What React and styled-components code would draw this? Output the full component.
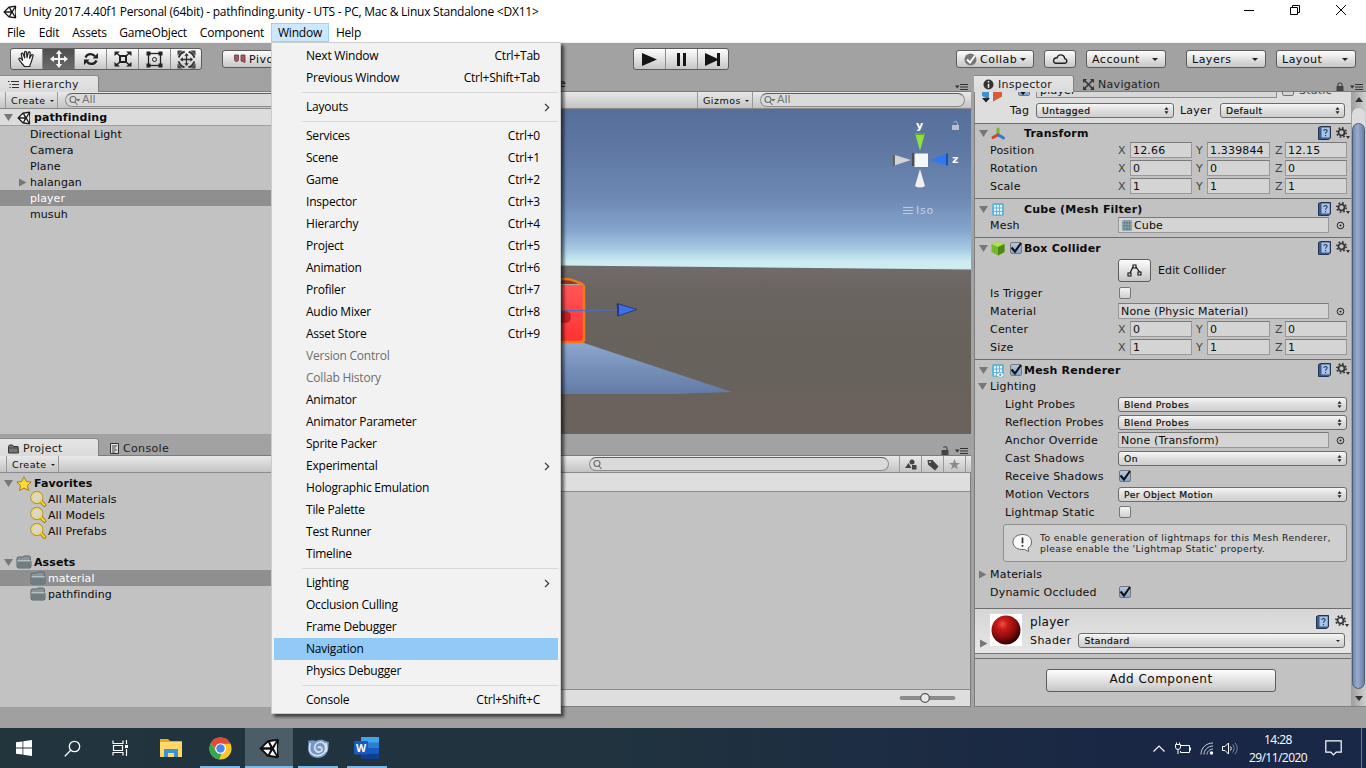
import React from "react";
import styled, { createGlobalStyle, css } from "styled-components";

const Global = createGlobalStyle`
  * { box-sizing: border-box; }
  body { margin: 0; overflow: hidden; background: #a2a2a2; }
  svg { display: block; flex: none; }
`;

const uiFont = css`font-family: "Open Sans", "Noto Sans", sans-serif;`;
const editorFont = css`font-family: "DejaVu Sans", sans-serif;`;

const Screen = styled.div`
  width: 1366px;
  height: 768px;
  display: flex;
  flex-direction: column;
  position: relative;
  overflow: hidden;
  background: #a2a2a2;
  color: #0c0c0c;
  font-size: 11px;
  white-space: nowrap;
  ${editorFont}
`;

/* ---------- window chrome ---------- */
const TitleBar = styled.header`
  height: 23px;
  flex: none;
  background: #fff;
  display: flex;
  align-items: center;
  padding: 0 2px 0 3px;
  gap: 6px;
  font-size: 12px;
  letter-spacing: -0.235px;
  color: #000;
  ${uiFont}
`;
const TitleText = styled.span`
  flex: 1;
  line-height: 22px;
`;
const WindowControls = styled.div`
  display: flex;
  height: 20px;
  align-self: flex-start;
`;
const WindowControl = styled.div`
  width: 46px;
  display: flex;
  align-items: center;
  justify-content: center;
`;
const MenuBar = styled.nav`
  height: 20px;
  flex: none;
  display: flex;
  background: #fff;
  border-bottom: 1px solid #f0f0f0;
  font-size: 12px;
  color: #000;
  ${uiFont}
`;
const MenuBarItem = styled.span`
  width: ${(p) => p.$w}px;
  height: 19px;
  line-height: 19px;
  text-align: center;
  letter-spacing: -0.2px;
  background: ${(p) => (p.$open ? "#cce8ff" : "transparent")};
  box-shadow: ${(p) => (p.$open ? "inset 0 0 0 1px #99d1ff" : "none")};
`;

/* ---------- dropdown ---------- */
const Dropdown = styled.ul`
  position: absolute;
  left: 271px;
  top: 42px;
  width: 290px;
  height: 672px;
  margin: 0;
  padding: 2px 2px 0;
  list-style: none;
  background: #f2f2f2;
  border: 1px solid #ccc;
  box-shadow: 3px 3px 3px rgba(0, 0, 0, 0.6);
  color: #000;
  font-size: 12px;
  z-index: 5;
  ${uiFont}
`;
const DropItem = styled.li`
  height: 22px;
  line-height: 22px;
  display: flex;
  align-items: center;
  justify-content: space-between;
  padding: 0 ${(p) => (p.$sub ? 8 : 18)}px 0 32px;
  letter-spacing: -0.22px;
  color: ${(p) => (p.$off ? "#6d6d6d" : "#000")};
  background: ${(p) => (p.$hot ? "#91c9f7" : "transparent")};
`;
const DropRule = styled.li`
  height: 7px;
  padding: 3px 0 0 28px;
  &::after {
    content: "";
    display: block;
    height: 1px;
    background: #d7d7d7;
  }
`;

/* ---------- editor toolbar ---------- */
const buttonFace = css`
  border: 1px solid #5c5c5c;
  border-radius: 3px;
  background: linear-gradient(#fdfdfd, #e2e2e2 50%, #c6c6c6);
`;
const EditorBar = styled.div`
  height: 32px;
  flex: none;
  display: flex;
  align-items: center;
  padding: 0 10px;
`;
const ButtonGroup = styled.div`
  display: flex;
  height: 22px;
  margin-left: ${(p) => p.$ml || 0}px;
  overflow: hidden;
  ${buttonFace}
`;
const GroupButton = styled.div`
  width: 32px;
  display: flex;
  align-items: center;
  justify-content: center;
  background: ${(p) => (p.$on ? "linear-gradient(#4f4f4f, #6b6b6b)" : "none")};
  & + & { border-left: 1px solid #8d8d8d; }
  &:first-child, &:last-child { width: 31px; }
`;
const BarButton = styled.div`
  height: 18px;
  width: ${(p) => p.$w}px;
  margin-left: ${(p) => p.$ml}px;
  display: flex;
  align-items: center;
  gap: 3px;
  padding: 0 7px 0 ${(p) => (p.$pl === undefined ? 5 : p.$pl)}px;
  letter-spacing: 0.5px;
  font-size: 11px;
  line-height: 17px;
  ${buttonFace}
`;
const Grow = styled.span`
  flex: 1;
  min-width: 0;
`;
const Caret = styled.i`
  border: solid transparent;
  border-width: ${(p) => p.$s || 3}px ${(p) => p.$s || 3}px 0;
  border-top-color: #222;
  flex: none;
`;

/* ---------- docks ---------- */
const Workspace = styled.main`
  height: 632px;
  flex: none;
  display: flex;
  gap: 3px;
`;
const LeftDock = styled.section`
  width: 971px;
  display: flex;
  flex-direction: column;
`;
const DockRow = styled.div`
  display: flex;
  height: ${(p) => p.$h}px;
  margin-bottom: ${(p) => p.$mb || 0}px;
`;
const Panel = styled.section`
  width: ${(p) => p.$w}px;
  display: flex;
  flex-direction: column;
  background: #c2c2c2;
  overflow: hidden;
`;
const TabStrip = styled.div`
  height: ${(p) => p.$h || 17}px;
  flex: none;
  display: flex;
  align-items: stretch;
  background: #a2a2a2;
  border-bottom: 1px solid #7c7c7c;
`;
const Tab = styled.div`
  width: ${(p) => p.$w}px;
  display: flex;
  align-items: center;
  gap: 4px;
  padding-left: ${(p) => p.$pl || 8}px;
  padding-top: ${(p) => (p.$pt === undefined ? 1 : p.$pt)}px;
  letter-spacing: ${(p) => p.$ls || 0.3}px;
  color: #1c1c1c;
  ${(p) =>
    p.$active &&
    css`
      background: linear-gradient(#e6e6e6, #dadada);
      border-top: 1px solid #8a8a8a;
      border-right: 1px solid #808080;
      border-radius: 0 3px 0 0;
      margin-bottom: -1px;
    `}
`;
const TabTools = styled.div`
  margin-left: auto;
  display: flex;
  align-items: flex-end;
  gap: 6px;
  padding: 0 3px 0 0;
`;
const HiddenTabs = styled.div`
  width: 291px;
  text-align: right;
  line-height: 18px;
  letter-spacing: 0.3px;
`;
const PanelBar = styled.div`
  height: 17px;
  flex: none;
  display: flex;
  align-items: center;
  background: linear-gradient(#e9e9e9, #c4c4c4);
  border-bottom: 1px solid #8a8a8a;
`;
const BarCell = styled.div`
  height: 16px;
  width: ${(p) => p.$w}px;
  flex: none;
  margin-left: ${(p) => p.$ml || 0}px;
  display: flex;
  align-items: center;
  justify-content: ${(p) => (p.$center ? "center" : "space-between")};
  padding: 1px ${(p) => (p.$center ? 0 : 3)}px 0 ${(p) => (p.$center ? 0 : 5)}px;
  border-left: 1px solid #9a9a9a;
  border-right: ${(p) => (p.$last ? "1px solid #9a9a9a" : "0")};
  font-size: 9.5px;
  letter-spacing: 0.5px;
  line-height: 15px;
`;
const Search = styled.div`
  height: 14px;
  width: ${(p) => p.$w}px;
  flex: none;
  margin-left: ${(p) => p.$ml || 0}px;
  border: 1px solid #8b8b8b;
  border-top-color: #5d5d5d;
  border-radius: 8px;
  background: #dadada;
  display: flex;
  align-items: center;
  gap: 1px;
  padding-left: 3px;
  color: #757575;
  font-size: 11px;
  line-height: 12px;
`;
const Tree = styled.div`
  width: 275px;
  padding-top: ${(p) => p.$pt || 0}px;
`;
const TreeRow = styled.div`
  height: ${(p) => p.$h || 16}px;
  margin-top: ${(p) => p.$mt || 0}px;
  padding-left: ${(p) => p.$pl}px;
  padding-top: ${(p) => (p.$head ? 1 : 0)}px;
  display: flex;
  align-items: center;
  gap: ${(p) => p.$gap || 0}px;
  letter-spacing: ${(p) => (p.$bold ? 0.1 : 0.08)}px;
  font-weight: ${(p) => (p.$bold ? 700 : 400)};
  color: ${(p) => (p.$sel ? "#fff" : "#0a0a0a")};
  background: ${(p) => (p.$sel ? "#8f8f8f" : p.$head ? "#dcdcdc" : "transparent")};
  border-bottom: ${(p) => (p.$head ? "1px solid #a0a0a0" : "0")};
`;
const ProjectBody = styled.div`
  display: flex;
  flex: 1;
`;
const AssetPane = styled.div`
  flex: 1;
  display: flex;
  flex-direction: column;
  justify-content: space-between;
  border-right: 1px solid #7d7d7d;
  border-bottom: 1px solid #7d7d7d;
`;
const Crumbs = styled.div`
  height: 19px;
  background: #dedede;
  border-bottom: 1px solid #8c8c8c;
`;
const ZoomBar = styled.div`
  height: 17px;
  background: #dedede;
  border-top: 1px solid #8c8c8c;
  display: flex;
  justify-content: flex-end;
  padding: 0 14px 0 0;
  align-items: center;
`;

/* ---------- inspector ---------- */
const InspectorDock = styled.section`
  width: 392px;
  display: flex;
  flex-direction: column;
`;
const InspectorBody = styled.div`
  flex: 1;
  display: flex;
  min-height: 0;
  border-bottom: 1px solid #808080;
`;
const InspectorList = styled.div`
  width: 377px;
  border-left: 1px solid #808080;
  background: #c2c2c2;
  overflow: hidden;
`;
const ObjectHeader = styled.div`
  height: 32px;
  background: #dedede;
  border-bottom: 1px solid #6e6e6e;
  overflow: hidden;
  display: flex;
  padding-left: 6px;
`;
const ObjectFields = styled.div`
  margin-top: -10px;
  flex: 1;
`;
const ObjectLine = styled.div`
  display: flex;
  align-items: center;
  height: ${(p) => p.$h}px;
  margin-top: ${(p) => p.$mt || 0}px;
  letter-spacing: 0.2px;
`;
const NameField = styled.div`
  width: 241px;
  height: 16px;
  margin: 0 5px 0 6px;
  border: 1px solid #8e8e8e;
  background: #d8d8d8;
  padding-left: 3px;
  line-height: 15px;
`;
const StaticLabel = styled.span`
  width: 57px;
  padding-left: 5px;
  color: #444;
`;
const TagLabel = styled.span`
  width: 55px;
  padding-left: 29px;
`;
const LayerLabel = styled.span`
  width: 46px;
  padding-left: 6px;
`;
const Component = styled.div`
  height: ${(p) => p.$h}px;
  border-bottom: 1px solid #6e6e6e;
`;
const CompHead = styled.div`
  height: ${(p) => p.$h || 18}px;
  display: flex;
  align-items: center;
  padding: 2px 1px 0 4px;
  font-weight: 700;
  letter-spacing: 0.2px;
`;
const HeadIcon = styled.span`
  width: 16px;
  margin: 0 ${(p) => (p.$top ? 0 : 2)}px;
  padding-top: ${(p) => (p.$top ? 4 : 0)}px;
  display: flex;
  justify-content: ${(p) => (p.$top ? "flex-start" : "center")};
`;
const CheckSlot = styled.span`
  width: 16px;
  padding-left: 1px;
  display: flex;
`;
const HeadTools = styled.span`
  display: flex;
  align-items: center;
  gap: ${(p) => p.$gap || 5}px;
  padding-bottom: 1px;
`;
const Row = styled.div`
  height: ${(p) => p.$h || 18}px;
  display: flex;
  align-items: center;
`;
const RowLabel = styled.span`
  width: 143px;
  padding-left: ${(p) => (p.$in ? 30 : 15)}px;
  letter-spacing: 0.2px;
  flex: none;
  color: #0e0e0e;
`;
const FoldLabel = styled.span`
  display: flex;
  align-items: center;
  gap: 3px;
  padding-left: 3px;
  letter-spacing: 0.2px;
`;
const EditLabel = styled.span`
  letter-spacing: 0.1px;
`;
const Axis = styled.span`
  width: ${(p) => p.$w}px;
  color: #444;
`;
const Field = styled.span`
  width: ${(p) => p.$w}px;
  height: 16px;
  margin-right: ${(p) => p.$mr || 0}px;
  border: 1px solid #989898;
  border-top-color: #7a7a7a;
  background: #d4d4d4;
  padding: 0 1px 0 2px;
  line-height: 15px;
  letter-spacing: 0.16px;
  display: flex;
  align-items: center;
  gap: 1px;
  overflow: hidden;
`;
const Popup = styled.span`
  width: ${(p) => p.$w}px;
  height: 15px;
  border: 1px solid #6c6c6c;
  border-radius: 3px;
  background: linear-gradient(#f6f6f6, #dedede 50%, #cfcfcf);
  padding: 0 4px 0 5px;
  font-size: 9.2px;
  letter-spacing: 0.44px;
  display: flex;
  align-items: center;
  justify-content: space-between;
  line-height: 13px;
  -webkit-text-stroke: 0.2px #111;
`;
const CheckBox = styled.span`
  width: 12px;
  height: 12px;
  margin-left: ${(p) => p.$ml || 0}px;
  border: 1px solid #777;
  border-radius: 2px;
  background: ${(p) => (p.$on ? "linear-gradient(#b4c6e2, #86a4d2)" : "linear-gradient(#f4f4f4, #d0d0d0)")};
  display: flex;
  align-items: center;
  justify-content: center;
`;
const ColliderButton = styled.span`
  width: 33px;
  height: 23px;
  margin-right: 7px;
  display: flex;
  align-items: center;
  justify-content: center;
  ${buttonFace}
`;
const HelpBox = styled.div`
  height: 38px;
  width: 344px;
  margin: 3px 0 3px 28px;
  border: 1px solid #8f8f8f;
  border-radius: 3px;
  background: #cfcfcf;
  display: flex;
  align-items: center;
  gap: 7px;
  padding-left: 8px;
  font-size: 9.3px;
  line-height: 11px;
  letter-spacing: 0.36px;
  color: #222;
`;
const MaterialBlock = styled.div`
  height: 45px;
  background: linear-gradient(#d6d6d6, #e6e6e6);
  border-bottom: 1px solid #7a7a7a;
  display: flex;
`;
const MaterialInfo = styled.div`
  flex: 1;
  padding: 5px 2px 0 8px;
`;
const MaterialLine = styled.div`
  display: flex;
  align-items: center;
  height: ${(p) => p.$h}px;
  letter-spacing: ${(p) => p.$ls || 0.3}px;
  font-size: ${(p) => p.$fs || 11}px;
  gap: ${(p) => p.$gap || 0}px;
`;
const MaterialFold = styled.span`
  padding: 30px 0 0 4px;
  width: 15px;
`;
const BallBox = styled.span`
  padding-top: 5px;
`;
const AddArea = styled.div`
  border-top: 1px solid #6e6e6e;
  margin-top: 4px;
  padding: 10px 0 0 71px;
`;
const AddButton = styled.div`
  width: 230px;
  height: 23px;
  text-align: center;
  font-size: 12px;
  letter-spacing: 0.5px;
  line-height: 19px;
  ${buttonFace}
`;
const ScrollTrack = styled.div`
  width: 15px;
  background: linear-gradient(90deg, #9e9e9e, #cfcfcf);
  display: flex;
  flex-direction: column;
  align-items: center;
`;
const ScrollArrow = styled.i`
  border: solid transparent;
  border-width: ${(p) => (p.$up ? "0 4px 5px" : "5px 4px 0")};
  border-color: transparent transparent ${(p) => (p.$up ? "#333" : "transparent")};
  border-top-color: ${(p) => (p.$up ? "transparent" : "#333")};
  margin: ${(p) => (p.$up ? "5px 0 6px" : "7px 0 0")};
`;
const ScrollCap = styled.div`
  width: 13px;
  height: 24px;
  border-radius: 7px 7px 0 0;
  background: #dcdcdc;
  margin-bottom: -9px;
`;
const ScrollThumb = styled.div`
  width: 13px;
  height: 566px;
  border: 1px solid #4b5b78;
  border-radius: 7px;
  background: linear-gradient(90deg, #7287ac, #9aacca 40%, #6b80a8);
`;

/* ---------- bottom ---------- */
const StatusStrip = styled.div`
  height: 21px;
  flex: none;
  background: #a0a0a0;
`;
const TaskBar = styled.footer`
  height: 40px;
  flex: none;
  background: linear-gradient(90deg, #22353d, #20333f 45%, #192645 85%, #1a2848);
  display: flex;
  color: #fff;
  font-size: 12px;
  ${uiFont}
`;
const TaskButton = styled.div`
  width: 48px;
  margin-left: ${(p) => p.$ml || 0}px;
  display: flex;
  align-items: center;
  justify-content: center;
  background: ${(p) => (p.$active ? "#4b5d66" : "transparent")};
  ${(p) =>
    p.$open &&
    css`
      background-image: linear-gradient(#7cb9e8, #7cb9e8);
      background-repeat: no-repeat;
      background-position: bottom center;
      background-size: ${p.$active ? 48 : 40}px 2px;
    `}
`;
const Tray = styled.div`
  margin-left: auto;
  display: flex;
  align-items: center;
`;
const TrayIcon = styled.span`
  width: ${(p) => p.$w || 24}px;
  margin-right: ${(p) => p.$mr || 0}px;
  display: flex;
  justify-content: center;
`;
const Clock = styled.div`
  width: 74px;
  text-align: center;
  line-height: 18px;
  padding-top: 1px;
  font-size: 12px;
  letter-spacing: -0.55px;
`;
const ShowDesktop = styled.div`
  width: 5px;
  height: 40px;
  border-left: 1px solid #6c778c;
`;

/* ---------- drawings ---------- */
const UnityMark = ({ s = 14, dark = "#1c1c1c", light = "#fff" }) => (
  <svg width={s} height={s} viewBox="0 0 20 20">
    <path d="M.3 10 8 2.200 18 .6 19 2 18 10l1 8-1 1.400L8 17.800Z" fill={dark} />
    <path d="M4 8.900 8.600 4.400 10.800 8.900ZM4 11.100h6.800L8.600 15.600ZM10.400 3.900 16.200 2.900 12.900 8.200ZM10.400 16.100l5.800 1-3.300-5.300ZM14.200 10 17 4.600v10.800Z" fill={light} />
  </svg>
);
const Tri = ({ open }) => (
  <svg width="9" height="9" viewBox="0 0 9 9">
    <path d={open ? "M0 1h9L4.500 8Z" : "M1 .5v8L8.500 4.500Z"} fill="#777" />
  </svg>
);
const HandIcon = () => (
  <svg width="18" height="18" viewBox="0 0 18 18" fill="#fff" stroke="#222" strokeWidth="1.200" strokeLinejoin="round">
    <path d="M6.500 16.500C4 13.500 2.300 11.400 1 9.600c-.6-1.300 1-1.900 2-.9l1.600 1.700L3.300 4.500c-.2-1.500 1.400-1.800 1.900-.5L6.700 8 6.600 2.400c0-1.500 1.900-1.500 2 0L9 7.700l1.300-5c.4-1.300 2-1 1.900.4L11.600 8.300l1.800-3.200c.8-1 2.200-.4 1.700.9-1.200 3-1.300 5.500-2.600 7.700-.6 1.100-.7 1.700-.7 2.800Z" />
  </svg>
);
const MoveIcon = ({ c = "#f2f2f2", s = 18 }) => (
  <svg width={s} height={s} viewBox="0 0 18 18">
    <path d="M9 0l3.200 4H10v4h4V5.800L18 9l-4 3.200V10h-4v4h2.200L9 18l-3.200-4H8v-4H4v2.200L0 9l4-3.200V8h4V4H5.800Z" fill={c} />
  </svg>
);
const RotateIcon = () => (
  <svg width="16" height="16" viewBox="0 0 16 16" fill="none" stroke="#222" strokeWidth="2.200">
    <path d="M2.500 6.500C4 2.500 9.500 2 12 5.200M13.500 9.500C12 13.500 6.500 14 4 10.800" />
    <path d="M15 2v5.500H9.500ZM1 14V8.500h5.500Z" fill="#222" stroke="none" />
  </svg>
);
const ScaleIcon = () => (
  <svg width="18" height="16" viewBox="0 0 18 16" stroke="#222" strokeWidth="2" fill="none">
    <rect x="6" y="5" width="6" height="6" />
    <path d="M6 5 2 1.500M12 5l4-3.500M6 11l-4 3.500M12 11l4 3.500" strokeWidth="1.600" />
    <path d="M.5 5V.5H6ZM17.500 5V.5H12ZM.5 11v4.500H6ZM17.500 11v4.500H12Z" fill="#222" stroke="none" />
  </svg>
);
const RectIcon = () => (
  <svg width="17" height="17" viewBox="0 0 17 17" stroke="#222" fill="none">
    <rect x="2.500" y="2.500" width="12" height="12" strokeWidth="1.300" />
    <circle cx="8.500" cy="8.500" r="2" />
    <path d="M.5.5h4v4h-4ZM12.500.5h4v4h-4ZM.5 12.500h4v4h-4ZM12.500 12.500h4v4h-4Z" fill="#222" stroke="none" />
  </svg>
);
const MultiIcon = () => (
  <svg width="19" height="19" viewBox="0 0 19 19" fill="none" stroke="#333">
    <circle cx="9.500" cy="9.500" r="8" strokeWidth="2" strokeDasharray="8.500 4.060" strokeDashoffset="-2" />
    <path d="M.5 5.500V.5h5ZM18.500 5.500V.5h-5ZM.5 13.500v5h5ZM18.500 13.500v5h-5Z" fill="#444" stroke="none" />
    <path d="M9.500 4v11M4 9.500h11" strokeWidth="1.300" />
    <path d="M9.500 3l2.200 2.800H7.300ZM9.500 16l2.200-2.800H7.300ZM3 9.500l2.800-2.200v4.400ZM16 9.500l-2.800-2.200v4.400Z" fill="#333" stroke="none" />
  </svg>
);
const PivotIcon = () => (
  <svg width="12" height="10" viewBox="0 0 12 10">
    <path d="M.5 1h4v4.500a2 2 0 0 1-4 0ZM7 1h4v7.500L7 7Z" fill="#b5505f" stroke="#5b3a3f" strokeWidth=".8" />
  </svg>
);
const Lens = ({ menu }) => (
  <svg width="12" height="11" viewBox="0 0 12 11" fill="none" stroke="#6d6d6d" strokeWidth="1.100">
    <circle cx="4" cy="4.500" r="3" />
    <path d="M6 7l2.500 3" />
    {menu && <path d="M7 4h4.500L9.300 6.500Z" fill="#6d6d6d" stroke="none" />}
  </svg>
);
const PanelMenu = () => (
  <svg width="13" height="7" viewBox="0 0 13 7">
    <path d="M0 1.500h4.500L2.200 4.500Z" fill="#333" />
    <path d="M5 .5h8M5 3h8M5 5.500h8" stroke="#333" />
  </svg>
);
const Lock = ({ open, c = "#444" }) => (
  <svg width="8" height="9" viewBox="0 0 8 9">
    <rect x=".5" y="4" width="7" height="5" fill={c} />
    <path d={open ? "M2.300 1.500C3.500.2 6 .5 6 2.500V4" : "M2 4V2.500C2 .4 6 .4 6 2.500V4"} fill="none" stroke={c} strokeWidth="1.100" />
  </svg>
);
const ListIcon = () => (
  <svg width="11" height="9" viewBox="0 0 11 9">
    <path d="M3 1.500h8M4 4.500h7M4 7.500h7" stroke="#333" strokeWidth="1.100" />
    <path d="M0 1h1.500v1H0ZM1.500 4h1.200v1H1.500ZM1.500 7h1.200v1H1.500Z" fill="#333" />
  </svg>
);
const FolderTab = () => (
  <svg width="11" height="10" viewBox="0 0 11 10">
    <path d="M.5 9V2.500L1.500 1h3l1 1.500H10L10.500 9Z" fill="#777" stroke="#333" />
    <path d="M.5 4h10" stroke="#444" />
  </svg>
);
const DocIcon = () => (
  <svg width="9" height="11" viewBox="0 0 9 11">
    <path d="M.5.500h8v10h-8Z" fill="#ddd" stroke="#333" />
    <path d="M2 3h5M2 5h3.500M2 7h5M2 9h3" stroke="#333" strokeWidth=".9" />
  </svg>
);
const Star = () => (
  <svg width="16" height="15" viewBox="0 0 16 15">
    <path d="M8 .8l2.200 4.600 5 .6-3.700 3.500 1 5L8 12.100l-4.500 2.400 1-5L.8 6l5-.6Z" fill="#ffd93b" stroke="#a57d13" />
  </svg>
);
const YellowLens = () => (
  <svg width="17" height="16" viewBox="0 0 17 16" fill="none">
    <circle cx="6.800" cy="6.500" r="5" stroke="#a8861b" strokeWidth="3" />
    <path d="M10.500 10l4 4" stroke="#94700f" strokeWidth="3.600" strokeLinecap="round" />
    <circle cx="6.800" cy="6.500" r="5" stroke="#f3d96a" strokeWidth="1.500" fill="#d9d7c8" />
    <path d="M10.500 10l4 4" stroke="#ffd42c" strokeWidth="2" strokeLinecap="round" />
  </svg>
);
const Folder = () => (
  <svg width="16" height="14" viewBox="0 0 16 14">
    <path d="M1 12V3l.8-1h5L8 1h5.500l.8 1v4H15v6.200l-1 .8H2Z" fill="#8b9599" stroke="#5d686d" />
    <path d="M1.500 5h13l-.3 8H2Z" fill="#6f7d82" />
    <path d="M1.500 5h13v1.500h-13Z" fill="#b5bec1" />
  </svg>
);
const Book = () => (
  <svg width="13" height="14" viewBox="0 0 13 14">
    <path d="M.5 1.500 2.500.500h10v11.500l-2 1.500H.5Z" fill="#3d5b8c" stroke="#24344f" />
    <path d="M3.500 1.500h8.200v10H3.500Z" fill="#a9c4ea" />
    <path d="M5.800 5c.2-2 3.400-1.800 3.300 0-.1 1.200-1.500 1.200-1.600 2.700M7.500 9v1.200" stroke="#223b66" strokeWidth="1.100" fill="none" />
  </svg>
);
const Gear = () => (
  <svg width="14" height="13" viewBox="0 0 14 13">
    <circle cx="5.500" cy="5.500" r="3" fill="none" stroke="#333" strokeWidth="1.700" />
    <circle cx="5.500" cy="5.500" r="4.600" fill="none" stroke="#333" strokeWidth="1.700" strokeDasharray="1.700 1.913" />
    <path d="M10 9h4l-2 3Z" fill="#333" />
  </svg>
);
const Tick = () => (
  <svg width="12" height="12" viewBox="0 0 12 12">
    <path d="M1.500 5.500 5 9.500 11 1" stroke="#111" strokeWidth="2.100" fill="none" />
  </svg>
);
const Target = () => (
  <svg width="9" height="9" viewBox="0 0 9 9">
    <circle cx="4.500" cy="4.500" r="3.300" fill="none" stroke="#222" />
    <circle cx="4.500" cy="4.500" r="1" fill="#222" />
  </svg>
);
const Updown = () => (
  <svg width="5" height="7" viewBox="0 0 5 7">
    <path d="M2.500 0 4.500 2.700H.5ZM2.500 7 4.500 4.300H.5Z" fill="#222" />
  </svg>
);
const AxisIcon = () => (
  <svg width="15" height="13" viewBox="0 0 15 13" strokeWidth="3" strokeLinecap="round">
    <path d="M7 7V2" stroke="#7fb52c" />
    <path d="M6.500 8 2 10.500" stroke="#d6402c" />
    <path d="M7.500 8l5 3" stroke="#3b76c9" />
  </svg>
);
const Grid = ({ eye, dim }) => (
  <svg width={dim ? 12 : 14} height={dim ? 13 : 15} viewBox="0 0 14 15">
    <rect x="1" y="1" width="12" height="13" rx="2" fill={dim ? "#8fa3ac" : "#62b4dc"} />
    <path d="M3 3h2v2.500H3ZM6 3h2v2.500H6ZM9 3h2v2.500H9ZM3 6.500h2V9H3ZM6 6.500h2V9H6ZM9 6.500h2V9H9ZM3 10h2v2.500H3ZM6 10h2v2.500H6ZM9 10h2v2.500H9Z" fill={dim ? "#5e7a87" : "#e3f5fd"} />
    {eye && <path d="M5 12c2.500-3.500 6-3.500 8.500 0-2.500 3-6 3-8.500 0Z" fill="#fff" stroke="#6aa" strokeWidth=".7" />}
    {eye && <circle cx="9.300" cy="11.800" r="1.300" fill="#5ba7cf" />}
  </svg>
);
const GreenCube = () => (
  <svg width="14" height="15" viewBox="0 0 14 15">
    <path d="M7 .5 13.500 3v8L7 14.500.5 11V3Z" fill="#77b82a" />
    <path d="M7 .5 13.500 3 7 6 .5 3Z" fill="#b4e05a" />
    <path d="M7 6l6.500-3v8L7 14.500Z" fill="#4c8a14" />
  </svg>
);
const PrefabCube = () => (
  <svg width="22" height="24" viewBox="0 0 22 24">
    <path d="M1 6l10-4 10 4v10l-9 5.500-11-5.500Z" fill="#3f8fd2" />
    <path d="M12 10l9-4v10.500l-9 5Z" fill="#e05a35" />
    <path d="M12 12 8 11v9l4 2Z" fill="#dfe9f2" />
    <path d="M1 18h8l-4 4.500Z" fill="#222" />
  </svg>
);
const Bubble = () => (
  <svg width="21" height="20" viewBox="0 0 21 20">
    <path d="M10.500 1.500c5.500 0 9 3.200 9 7.500 0 3-1.500 5-3.500 6l.6 3.500-4.200-2.100c-6.800.8-11.400-2.400-11.400-7.400 0-4.300 4-7.500 9.500-7.500Z" fill="#fafafa" stroke="#666" />
    <path d="M10.500 4.500v5.800M10.500 12v1.700" stroke="#333" strokeWidth="1.700" />
  </svg>
);
const ColliderIcon = () => (
  <svg width="15" height="13" viewBox="0 0 15 13" stroke="#111" fill="none">
    <path d="M3 9 6 3M9 3l3.500 5" strokeWidth="1.200" />
    <path d="M1 9h3v3H1ZM6 1h3v3H6ZM11 8h3v3h-3Z" strokeWidth="1.100" />
  </svg>
);
const MaterialBall = () => (
  <svg width="32" height="32" viewBox="0 0 32 32">
    <defs>
      <radialGradient id="ball" cx=".38" cy=".3" r=".75">
        <stop offset="0" stopColor="#ef5149" />
        <stop offset=".25" stopColor="#c91a18" />
        <stop offset=".6" stopColor="#8d0d0c" />
        <stop offset="1" stopColor="#1e0000" />
      </radialGradient>
    </defs>
    <rect width="32" height="32" fill="#fff" />
    <circle cx="16" cy="16" r="14.500" fill="url(#ball)" />
  </svg>
);

const SceneView = () => (
  <svg width="696" height="325" viewBox="275 109 696 325">
    <defs>
      <linearGradient id="sky" x1="0" y1="0" x2="0" y2="1">
        <stop offset="0" stopColor="#566e9a" />
        <stop offset=".25" stopColor="#5e78a3" />
        <stop offset=".55" stopColor="#6d89b3" />
        <stop offset=".75" stopColor="#84a4cc" />
        <stop offset=".87" stopColor="#a8cae3" />
        <stop offset=".95" stopColor="#cdedf3" />
        <stop offset="1" stopColor="#cfeaee" />
      </linearGradient>
      <linearGradient id="ground" x1="0" y1="0" x2="0" y2="1">
        <stop offset="0" stopColor="#8b9395" />
        <stop offset=".02" stopColor="#706c6c" />
        <stop offset=".15" stopColor="#6b6562" />
        <stop offset=".5" stopColor="#68625c" />
        <stop offset="1" stopColor="#6a625d" />
      </linearGradient>
      <linearGradient id="plane" x1="0" y1="0" x2="0" y2="1">
        <stop offset="0" stopColor="#8ba6cf" />
        <stop offset="1" stopColor="#637aa5" />
      </linearGradient>
      <linearGradient id="cube" x1="0" y1="0" x2="0" y2="1">
        <stop offset="0" stopColor="#ff5a5c" />
        <stop offset="1" stopColor="#ff3033" />
      </linearGradient>
    </defs>
    <rect x="275" y="109" width="696" height="161" fill="url(#sky)" />
    <path d="M275 262 561 265.500 971 269.500V434H275Z" fill="url(#ground)" />
    <path d="M400 343h184L732 392l-60 2H400Z" fill="url(#plane)" />
    <path d="M500 279h66l5 0 13 6v56l-3 2h-81Z" fill="url(#cube)" />
    <path d="M500 280h70l13 5h-83Z" fill="#8c3a36" />
    <path d="M500 284.500h83" stroke="#b8a59c" />
    <path d="M556 311h10q5 1 5 6t-5 6h-10Z" fill="#c32025" />
    <path d="M500 279h66q5 0 10 2.500l6 2.500q2 1 2 3v52q0 3-3 3h-81" fill="none" stroke="#f07a18" strokeWidth="2.500" />
    <path d="M500 311.500 620 310" stroke="#4f6fc0" strokeWidth="1.200" />
    <path d="M617 303.500 637 309.500 618 316Z" fill="#3d6fe8" stroke="#1d2f6e" strokeWidth=".8" />
    <path d="M617 303.500l2 1v10l-2 1.500Z" fill="#1d3a8c" />
    <path d="M915 133h10l-5 18Z" fill="#8ee03c" />
    <path d="M915 133h10l-1 2h-8Z" fill="#5fa823" />
    <path d="M893 154.500 911 160l-18 6Z" fill="#d3d3d3" />
    <path d="M892.500 154.500h2.500v11.500h-2.500Z" fill="#666" />
    <path d="M948 153v13l-18-6Z" fill="#2f78f0" />
    <path d="M948 153v13l-2-1V154Z" fill="#1d4fae" />
    <path d="M912 153h3v13h-3Z" fill="#4a4f5a" />
    <rect x="914.500" y="153.500" width="13.500" height="13.500" fill="#f5f7fa" />
    <path d="M920 169l5 17q-5 3-10 0Z" fill="#eef0f2" />
    <g fontFamily="DejaVu Sans" fontSize="11" fill="#fff">
      <text x="916" y="129" fontWeight="700">y</text>
      <text x="952" y="163" fontWeight="700">z</text>
      <text x="916" y="214" fill="#c5cfdf" letterSpacing=".8">Iso</text>
    </g>
    <path d="M903 207.500h10M903 210.500h10M903 213.500h10" stroke="#bcc9dc" />
    <rect x="952" y="125" width="7" height="5" fill="#b9bfc9" />
    <path d="M953.500 122.500c1-1.500 4-1.500 4 1V125" fill="none" stroke="#b9bfc9" />
  </svg>
);

/* ---------- composed parts ---------- */
const SHORTCUTS = [
  ["Next Window", "Ctrl+Tab"], ["Previous Window", "Ctrl+Shift+Tab"], null,
  ["Layouts", ">"], null,
  ["Services", "Ctrl+0"], ["Scene", "Ctrl+1"], ["Game", "Ctrl+2"], ["Inspector", "Ctrl+3"],
  ["Hierarchy", "Ctrl+4"], ["Project", "Ctrl+5"], ["Animation", "Ctrl+6"], ["Profiler", "Ctrl+7"],
  ["Audio Mixer", "Ctrl+8"], ["Asset Store", "Ctrl+9"], ["Version Control", "", "off"],
  ["Collab History", "", "off"], ["Animator"], ["Animator Parameter"], ["Sprite Packer"],
  ["Experimental", ">"], ["Holographic Emulation"], ["Tile Palette"], ["Test Runner"], ["Timeline"], null,
  ["Lighting", ">"], ["Occlusion Culling"], ["Frame Debugger"], ["Navigation", "", "hot"], ["Physics Debugger"], null,
  ["Console", "Ctrl+Shift+C"],
];
const Chevron = () => (
  <svg width="6" height="9" viewBox="0 0 6 9">
    <path d="M1 .8 4.700 4.500 1 8.200" fill="none" stroke="#333" strokeWidth="1.200" />
  </svg>
);
const WindowMenu = () => (
  <Dropdown>
    {SHORTCUTS.map((it, i) =>
      it === null ? (
        <DropRule key={i} />
      ) : (
        <DropItem key={i} $off={it[2] === "off"} $hot={it[2] === "hot"} $sub={it[1] === ">"}>
          <span>{it[0]}</span>
          {it[1] === ">" ? <Chevron /> : <span>{it[1]}</span>}
        </DropItem>
      )
    )}
  </Dropdown>
);
const Check = ({ on, ml }) => <CheckBox $on={on} $ml={ml}>{on && <Tick />}</CheckBox>;
const Vector = ({ label, v }) => (
  <Row>
    <RowLabel>{label}</RowLabel>
    <Axis $w={12}>X</Axis><Field $w={62} $mr={4}>{v[0]}</Field>
    <Axis $w={11}>Y</Axis><Field $w={63} $mr={5}>{v[1]}</Field>
    <Axis $w={10}>Z</Axis><Field $w={62}>{v[2]}</Field>
  </Row>
);
const ObjectRow = ({ label, inset, icon, value, h }) => (
  <Row $h={h}>
    <RowLabel $in={inset}>{label}</RowLabel>
    <Field $w={211} $mr={7}>{icon}{value}</Field>
    <Target />
  </Row>
);
const PopupRow = ({ label, value }) => (
  <Row><RowLabel $in>{label}</RowLabel><Popup $w={229}>{value}<Updown /></Popup></Row>
);
const CheckRow = ({ label, on, inset, h }) => (
  <Row $h={h}><RowLabel $in={inset}>{label}</RowLabel><Check on={on} ml={1} /></Row>
);
const Head = ({ icon, check, title, h }) => (
  <CompHead $h={h}>
    <Tri open />
    <HeadIcon>{icon}</HeadIcon>
    <CheckSlot>{check && <Check on ml={1} />}</CheckSlot>
    <Grow>{title}</Grow>
    <HeadTools><Book /><Gear /></HeadTools>
  </CompHead>
);

const HierarchyPanel = () => (
  <Panel $w={275}>
    <TabStrip>
      <Tab $active $w={99} $pl={8}><ListIcon />Hierarchy</Tab>
    </TabStrip>
    <PanelBar>
      <BarCell $w={53} $ml={5} $last>Create<Caret $s={2.5} /></BarCell>
      <Search $w={240} $ml={7}><Lens menu />All</Search>
    </PanelBar>
    <Tree>
      <TreeRow $head $bold $h={17} $pl={4} $gap={3.5}><Tri open /><UnityMark s={14} />pathfinding</TreeRow>
      <TreeRow $pl={30}>Directional Light</TreeRow>
      <TreeRow $pl={30}>Camera</TreeRow>
      <TreeRow $pl={30}>Plane</TreeRow>
      <TreeRow $pl={18} $gap={3}><Tri />halangan</TreeRow>
      <TreeRow $pl={30} $sel>player</TreeRow>
      <TreeRow $pl={30}>musuh</TreeRow>
    </Tree>
  </Panel>
);
const ScenePanel = () => (
  <Panel $w={696}>
    <TabStrip>
      <HiddenTabs>Asset Store</HiddenTabs>
      <TabTools><PanelMenu /></TabTools>
    </TabStrip>
    <PanelBar>
      <BarCell $w={56} $ml={422} $last>Gizmos<Caret $s={2.5} /></BarCell>
      <Search $w={205} $ml={7}><Lens menu />All</Search>
    </PanelBar>
    <SceneView />
  </Panel>
);
const ProjectPanel = () => (
  <Panel $w={971}>
    <TabStrip $h={18}>
      <Tab $active $w={99} $pl={8} $pt={2}><FolderTab />Project</Tab>
      <Tab $w={120} $pl={11} $pt={3} $ls={0.35}><DocIcon />Console</Tab>
      <TabTools><Lock open /><PanelMenu /></TabTools>
    </TabStrip>
    <PanelBar>
      <BarCell $w={53} $ml={6} $last>Create<Caret $s={2.5} /></BarCell>
      <Search $w={300} $ml={530}><Lens /></Search>
      <BarCell $center $w={22} $ml={10}>
        <svg width="12" height="11" viewBox="0 0 12 11" fill="#444"><circle cx="7" cy="3" r="2.500" /><path d="M0 9 3.500 4l3 5ZM7 6h4.500v4.500H7Z" /></svg>
      </BarCell>
      <BarCell $center $w={22}>
        <svg width="12" height="12" viewBox="0 0 12 12"><path d="M.5 1h5l6 6.500-3.500 4L1 5.500Z" fill="#444" /><circle cx="3" cy="3" r="1" fill="#ccc" /></svg>
      </BarCell>
      <BarCell $center $w={23} $last>
        <svg width="11" height="11" viewBox="0 0 11 11"><path d="M5.500 0 7 4h4L7.700 6.500 9 10.500 5.500 8 2 10.500l1.300-4L0 4h4Z" fill="#8a8a8a" /></svg>
      </BarCell>
    </PanelBar>
    <ProjectBody>
      <Tree $pt={2}>
        <TreeRow $bold $pl={4} $gap={2.5}><Tri open /><Star />Favorites</TreeRow>
        <TreeRow $pl={30} $gap={1}><YellowLens />All Materials</TreeRow>
        <TreeRow $pl={30} $gap={1}><YellowLens />All Models</TreeRow>
        <TreeRow $pl={30} $gap={1}><YellowLens />All Prefabs</TreeRow>
        <TreeRow $bold $mt={15} $pl={4} $gap={2.5}><Tri open /><Folder />Assets</TreeRow>
        <TreeRow $pl={30} $gap={2} $sel><Folder />material</TreeRow>
        <TreeRow $pl={30} $gap={2}><Folder />pathfinding</TreeRow>
      </Tree>
      <AssetPane>
        <Crumbs />
        <ZoomBar>
          <svg width="57" height="12" viewBox="0 0 57 12">
            <rect x="1" y="4.500" width="55" height="3" rx="1.500" fill="#8c8c8c" stroke="#6b6b6b" strokeWidth=".6" />
            <circle cx="26" cy="6" r="4.300" fill="#e9e9e9" stroke="#555" strokeWidth="1.200" />
          </svg>
        </ZoomBar>
      </AssetPane>
    </ProjectBody>
  </Panel>
);
const Inspector = () => (
  <InspectorDock>
    <TabStrip>
      <Tab $active $w={100} $pl={9}>
        <svg width="11" height="11" viewBox="0 0 11 11"><circle cx="5.500" cy="5.500" r="5" fill="#333" /><path d="M5.500 2v1.500M5.500 4.800v4" stroke="#eee" strokeWidth="1.500" /></svg>
        Inspector
      </Tab>
      <Tab $w={120} $pl={9} $pt={2}>
        <svg width="11" height="11" viewBox="0 0 11 11"><path d="M1 1l9 9M10 1 1 10" stroke="#333" strokeWidth="1.500" /><path d="M0 0h4L0 4ZM11 0v4L7 0ZM0 11V7l4 4ZM11 11H7l4-4Z" fill="#333" /></svg>
        Navigation
      </Tab>
      <TabTools><Lock /><PanelMenu /></TabTools>
    </TabStrip>
    <InspectorBody>
      <InspectorList>
        <ObjectHeader>
          <ObjectFields>
            <ObjectLine $h={16}>
              <HeadIcon $top><PrefabCube /></HeadIcon>
              <Grow />
              <Check on />
              <NameField>player</NameField>
              <Check />
              <StaticLabel>Static</StaticLabel>
            </ObjectLine>
            <ObjectLine $h={16} $mt={4}>
              <TagLabel>Tag</TagLabel>
              <Popup $w={138}>Untagged<Updown /></Popup>
              <LayerLabel>Layer</LayerLabel>
              <Popup $w={125}>Default<Updown /></Popup>
            </ObjectLine>
          </ObjectFields>
        </ObjectHeader>
        <Component $h={75}>
          <Head icon={<AxisIcon />} title="Transform" h={17} />
          <Vector label="Position" v={["12.66", "1.339844", "12.15"]} />
          <Vector label="Rotation" v={["0", "0", "0"]} />
          <Vector label="Scale" v={["1", "1", "1"]} />
        </Component>
        <Component $h={39}>
          <Head icon={<Grid />} title="Cube (Mesh Filter)" />
          <ObjectRow label="Mesh" icon={<Grid dim />} value="Cube" h={16} />
        </Component>
        <Component $h={122}>
          <Head icon={<GreenCube />} check title="Box Collider" />
          <Row $h={28}><RowLabel /><ColliderButton><ColliderIcon /></ColliderButton><EditLabel>Edit Collider</EditLabel></Row>
          <CheckRow label="Is Trigger" />
          <ObjectRow label="Material" value="None (Physic Material)" />
          <Vector label="Center" v={["0", "0", "0"]} />
          <Vector label="Size" v={["1", "1", "1"]} />
        </Component>
        <Component $h={249}>
          <Head icon={<Grid eye />} check title="Mesh Renderer" />
          <Row $h={17}><FoldLabel><Tri open />Lighting</FoldLabel></Row>
          <PopupRow label="Light Probes" value="Blend Probes" />
          <PopupRow label="Reflection Probes" value="Blend Probes" />
          <ObjectRow label="Anchor Override" inset value="None (Transform)" />
          <PopupRow label="Cast Shadows" value="On" />
          <CheckRow label="Receive Shadows" inset on />
          <PopupRow label="Motion Vectors" value="Per Object Motion" />
          <CheckRow label="Lightmap Static" inset />
          <HelpBox>
            <Bubble />
            <div>To enable generation of lightmaps for this Mesh Renderer,<br />please enable the 'Lightmap Static' property.</div>
          </HelpBox>
          <Row><FoldLabel><Tri />Materials</FoldLabel></Row>
          <CheckRow label="Dynamic Occluded" on />
        </Component>
        <MaterialBlock>
          <MaterialFold><Tri /></MaterialFold>
          <BallBox><MaterialBall /></BallBox>
          <MaterialInfo>
            <MaterialLine $h={16} $fs={12}><Grow>player</Grow><HeadTools $gap={6}><Book /><Gear /></HeadTools></MaterialLine>
            <MaterialLine $h={21} $gap={7} $ls={0.4}>Shader<Popup $w={267}>Standard<Caret $s={2.5} /></Popup></MaterialLine>
          </MaterialInfo>
        </MaterialBlock>
        <AddArea><AddButton>Add Component</AddButton></AddArea>
      </InspectorList>
      <ScrollTrack>
        <ScrollArrow $up />
        <ScrollCap />
        <ScrollThumb />
        <ScrollArrow />
      </ScrollTrack>
    </InspectorBody>
  </InspectorDock>
);

const WordIcon = () => (
  <svg width="26" height="24" viewBox="0 0 26 24">
    <path d="M7 1h18v22H7Z" fill="#2b7cd3" /><path d="M7 1h18v5.500H7Z" fill="#41a5ee" />
    <path d="M7 12h18v5.500H7Z" fill="#185abd" /><path d="M7 17.500h18V23H7Z" fill="#103f91" />
    <rect x="0" y="5" width="14" height="13.500" rx="1" fill="#185abd" />
    <text x="7" y="15.500" fontFamily="Open Sans" fontWeight="700" fontSize="10.500" fill="#fff" textAnchor="middle">W</text>
  </svg>
);
const Chrome = () => (
  <svg width="23" height="23" viewBox="0 0 24 24">
    <circle cx="12" cy="12" r="11.500" fill="#fbc62d" />
    <path d="M2 6.300A11.500 11.500 0 0 1 22.300 7H12a5 5 0 0 0-4.500 7.200Z" fill="#e04a3a" />
    <path d="M2 6.300 7.600 15a5 5 0 0 0 5.600 2L10.500 23.400A11.500 11.500 0 0 1 2 6.300Z" fill="#35a552" />
    <circle cx="12" cy="12" r="5.600" fill="#fff" /><circle cx="12" cy="12" r="4.400" fill="#4a86ee" />
  </svg>
);
const Swirl = () => (
  <svg width="23" height="21" viewBox="0 0 23 21" fill="none">
    <path d="M1 3c3-1 6-1 8 0 4-2 8-1 9 0l4 1c-1 3 0 5-1 8-1 5-6 8-10 8C5 20 1 16 1 11 1 8 2 6 1 3Z" fill="#7896c2" />
    <path d="M3 5c0 4-2 6 1 10 3 3 9 4 13 0 3-4 2-10-3-11-5 0-7 4-6 7 1 4 6 4 7 1 0-3-3-4-4-2M19 5c1 3 1 6 0 9" stroke="#d3e3f4" strokeWidth="1.700" />
  </svg>
);

export default function App() {
  return (
    <Screen>
      <Global />
      <TitleBar>
        <UnityMark s={14} />
        <TitleText>Unity 2017.4.40f1 Personal (64bit) - pathfinding.unity - UTS - PC, Mac &amp; Linux Standalone &lt;DX11&gt;</TitleText>
        <WindowControls>
          <WindowControl><svg width="10" height="10" viewBox="0 0 10 10"><path d="M0 5.500h10" stroke="#000" /></svg></WindowControl>
          <WindowControl><svg width="10" height="10" viewBox="0 0 10 10" fill="none" stroke="#000"><path d="M.5 2.500h7v7h-7ZM2.500 2.500v-2h7v7h-2" /></svg></WindowControl>
          <WindowControl><svg width="10" height="10" viewBox="0 0 10 10"><path d="M0 0l10 10M10 0 0 10" stroke="#000" /></svg></WindowControl>
        </WindowControls>
      </TitleBar>
      <MenuBar>
        <MenuBarItem $w={32}>File</MenuBarItem>
        <MenuBarItem $w={34}>Edit</MenuBarItem>
        <MenuBarItem $w={47}>Assets</MenuBarItem>
        <MenuBarItem $w={80}>GameObject</MenuBarItem>
        <MenuBarItem $w={78}>Component</MenuBarItem>
        <MenuBarItem $w={58} $open>Window</MenuBarItem>
        <MenuBarItem $w={39}>Help</MenuBarItem>
      </MenuBar>
      <EditorBar>
        <ButtonGroup>
          <GroupButton><HandIcon /></GroupButton>
          <GroupButton $on><MoveIcon /></GroupButton>
          <GroupButton><RotateIcon /></GroupButton>
          <GroupButton><ScaleIcon /></GroupButton>
          <GroupButton><RectIcon /></GroupButton>
          <GroupButton><MultiIcon /></GroupButton>
        </ButtonGroup>
        <BarButton $w={64} $ml={20} $pl={11}><PivotIcon />Pivot</BarButton>
        <ButtonGroup $ml={347}>
          <GroupButton><svg width="15" height="13" viewBox="0 0 15 13"><path d="M0 0l15 6.500L0 13Z" fill="#151515" /></svg></GroupButton>
          <GroupButton><svg width="10" height="13" viewBox="0 0 10 13"><path d="M0 0h3v13H0ZM6 0h3v13H6Z" fill="#151515" /></svg></GroupButton>
          <GroupButton><svg width="16" height="13" viewBox="0 0 16 13"><path d="M0 0l12 5.500V0h3v13h-3V7.500L0 13Z" fill="#151515" /></svg></GroupButton>
        </ButtonGroup>
        <Grow />
        <BarButton $w={78} $ml={0} $pl={7}>
          <svg width="13" height="13" viewBox="0 0 13 13"><circle cx="6.500" cy="6.500" r="6" fill="#777" /><path d="M3 6.500 6 9.500 11 2.500" stroke="#fff" strokeWidth="2" fill="none" /></svg>
          <Grow>Collab</Grow><Caret />
        </BarButton>
        <BarButton $w={32} $ml={10} $pl={7}>
          <svg width="16" height="12" viewBox="0 0 15 11"><path d="M3.500 9.500h8c3 0 3.200-3.700.5-4.300C11.500 1 6 .2 4.800 4.300 1 4 .3 9 3.500 9.500Z" fill="none" stroke="#222" strokeWidth="1.300" /></svg>
        </BarButton>
        <BarButton $w={80} $ml={10}><Grow>Account</Grow><Caret /></BarButton>
        <BarButton $w={80} $ml={20}><Grow>Layers</Grow><Caret /></BarButton>
        <BarButton $w={80} $ml={10}><Grow>Layout</Grow><Caret /></BarButton>
      </EditorBar>
      <Workspace>
        <LeftDock>
          <DockRow $h={359} $mb={4}>
            <HierarchyPanel />
            <ScenePanel />
          </DockRow>
          <DockRow $h={269}>
            <ProjectPanel />
          </DockRow>
        </LeftDock>
        <Inspector />
      </Workspace>
      <StatusStrip />
      <TaskBar>
        <TaskButton><svg width="16" height="16" viewBox="0 0 16 16" fill="#fff"><path d="M0 2.300 6.500 1.400v6.200H0ZM7.300 1.200 16 0v7.600H7.300ZM0 8.400h6.500v6.200L0 13.700ZM7.300 8.400H16V16l-8.700-1.200Z" /></svg></TaskButton>
        <TaskButton><svg width="17" height="17" viewBox="0 0 17 17" fill="none" stroke="#fff" strokeWidth="1.300"><circle cx="10.500" cy="6.500" r="5.200" /><path d="M6.700 10.300.8 16.200" /></svg></TaskButton>
        <TaskButton><svg width="17" height="16" viewBox="0 0 17 16" fill="none" stroke="#fff" strokeWidth="1.200"><path d="M1 .5v3h10v-3M1 15.500v-3h10v3M1.500 5.500h9v5h-9ZM14.500 0v4M14.500 9v7" /><path d="M13 5h3v3h-3Z" fill="#fff" stroke="none" /></svg></TaskButton>
        <TaskButton $ml={3}>
          <svg width="22" height="18" viewBox="0 0 22 18"><path d="M0 0h8l2 2H22V18H0Z" fill="#e8a91c" /><path d="M0 3h22v15H0Z" fill="#ffd867" /><path d="M4 18v-8h14v8h-4v-4H8v4Z" fill="#3c93d2" /></svg>
        </TaskButton>
        <TaskButton $ml={1} $open><Chrome /></TaskButton>
        <TaskButton $ml={1} $open $active><UnityMark s={21} dark="#101010" /></TaskButton>
        <TaskButton $ml={1} $open><Swirl /></TaskButton>
        <TaskButton $ml={1} $open><WordIcon /></TaskButton>
        <Tray>
          <TrayIcon><svg width="12" height="7" viewBox="0 0 12 7"><path d="M.5 6.500 6 1l5.500 5.500" fill="none" stroke="#fff" strokeWidth="1.200" /></svg></TrayIcon>
          <TrayIcon><svg width="17" height="13" viewBox="0 0 17 13" fill="none" stroke="#fff"><path d="M6 3.500h8.500v7H5.500V9M15.500 5.500v3M1.500.500v2M4.500.500v2M.5 2.500h5v2.500a2.500 2.500 0 0 1-5 0ZM3 7.500V12" /></svg></TrayIcon>
          <TrayIcon><svg width="14" height="13" viewBox="0 0 14 13" fill="none" stroke="#c6ccd8"><path d="M1 12.500C1 6 6 1 13 1M4 12.500C4 8 8 4 13 4M7 12.500c0-3 3-5.500 6-5.500" /><circle cx="11.500" cy="11" r="1.700" fill="#fff" stroke="none" /></svg></TrayIcon>
          <TrayIcon $w={22}><svg width="17" height="13" viewBox="0 0 17 13" fill="none" stroke="#fff"><path d="M.5 4.500h2.500L6.500 1v11L3 8.500H.5Z" /><path d="M8.500 4.500q1.500 2 0 4" /><path d="M10.800 2.500q3 4 0 8M13 .8q4.500 5.700 0 11.400" stroke="#7d879b" /></svg></TrayIcon>
          <Clock>14:28<br />29/11/2020</Clock>
          <TrayIcon $w={36} $mr={10}><svg width="17" height="16" viewBox="0 0 17 16" fill="none" stroke="#fff" strokeWidth="1.200"><path d="M.8.8h15.400v11.400h-5l-2.700 2.800-2.700-2.800h-5Z" /></svg></TrayIcon>
          <ShowDesktop />
        </Tray>
      </TaskBar>
      <WindowMenu />
    </Screen>
  );
}
